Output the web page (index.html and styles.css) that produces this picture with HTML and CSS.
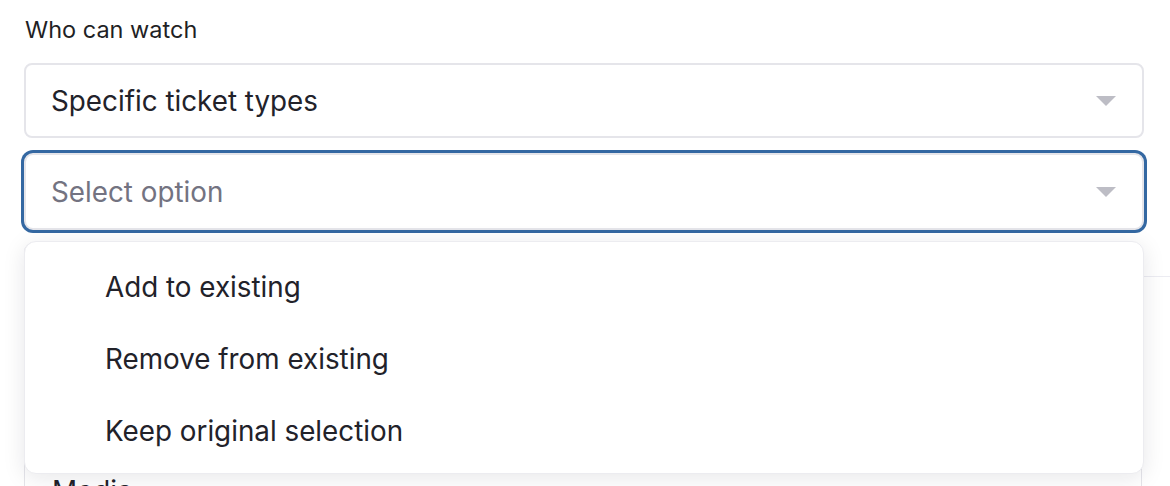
FILE: index.html
```html
<!DOCTYPE html>
<html>
<head>
<meta charset="utf-8">
<link rel="stylesheet" href="styles.css">
</head>
<body>
<div class="page">
  <div class="label">Who can watch</div>
  <div class="select">
    <span class="value">Specific ticket types</span>
    <svg class="caret" width="20" height="10" viewBox="0 0 20 10"><path d="M0 0 H20 L10 10 Z" fill="#bdbdc5"/></svg>
  </div>
  <div class="field-wrap">
    <div class="select focused">
      <span class="placeholder">Select option</span>
      <svg class="caret" width="20" height="10" viewBox="0 0 20 10"><path d="M0 0 H20 L10 10 Z" fill="#bdbdc5"/></svg>
    </div>
    <div class="menu">
      <div class="item">Add to existing</div>
      <div class="item">Remove from existing</div>
      <div class="item">Keep original selection</div>
    </div>
  </div>
  <div class="behind">
    <div class="behind-card">
      <div class="behind-head"></div>
      <div class="behind-text">Media</div>
    </div>
  </div>
</div>
</body>
</html>
```

FILE: styles.css
```css
* { box-sizing: border-box; }
html, body { margin: 0; padding: 0; background: #ffffff; }
body {
  font-family: Inter, "Noto Sans", sans-serif;
  color: #22222a;
  overflow: hidden;
  height: 486px;
}
.page {
  padding: 15px 26px 0 24px;
  width: 1170px;
}
.label {
  font-size: 23.5px;
  line-height: 30px;
  color: #1f1f25;
  padding-left: 1px;
  margin-bottom: 18px;
}
.select {
  width: 1120px;
  height: 75px;
  border: 2px solid #e5e5ea;
  border-radius: 8px;
  display: flex;
  align-items: center;
  justify-content: space-between;
  padding: 0 26px 0 25px;
  font-size: 27.8px;
  background: #fff;
}
.value { color: #22222a; }
.placeholder { color: #737381; }
.caret { display: block; margin-top: 1px; }
.field-wrap {
  position: relative;
  margin-top: 15px;
  z-index: 2;
}
.select.focused {
  height: 77px;
  box-shadow: 0 0 0 3px #3468a2;
  border-radius: 9px;
}
.menu {
  position: absolute;
  left: 0;
  top: 88px;
  width: 1120px;
  background: #fff;
  border: 1px solid #ececf0;
  border-radius: 12px;
  box-shadow: 0 4px 22px rgba(20, 20, 40, 0.10);
  padding: 9px 0 6px 80px;
}
.item {
  height: 72px;
  display: flex;
  align-items: center;
  font-size: 27.8px;
  color: #22222a;
}
.behind {
  margin-top: 12px;
  position: relative;
  z-index: 1;
}
.behind-card {
  width: 1118px;
  height: 260px;
  border: 1px solid #e5e5ea;
  border-radius: 10px;
  position: relative;
}
.behind-head {
  height: 34px;
  border-bottom: 1px solid #ececf2;
  margin-right: -60px;
}
.behind-text {
  position: absolute;
  left: 27px;
  top: 231px;
  font-size: 27.8px;
  line-height: 34px;
  color: #22222a;
}
```
